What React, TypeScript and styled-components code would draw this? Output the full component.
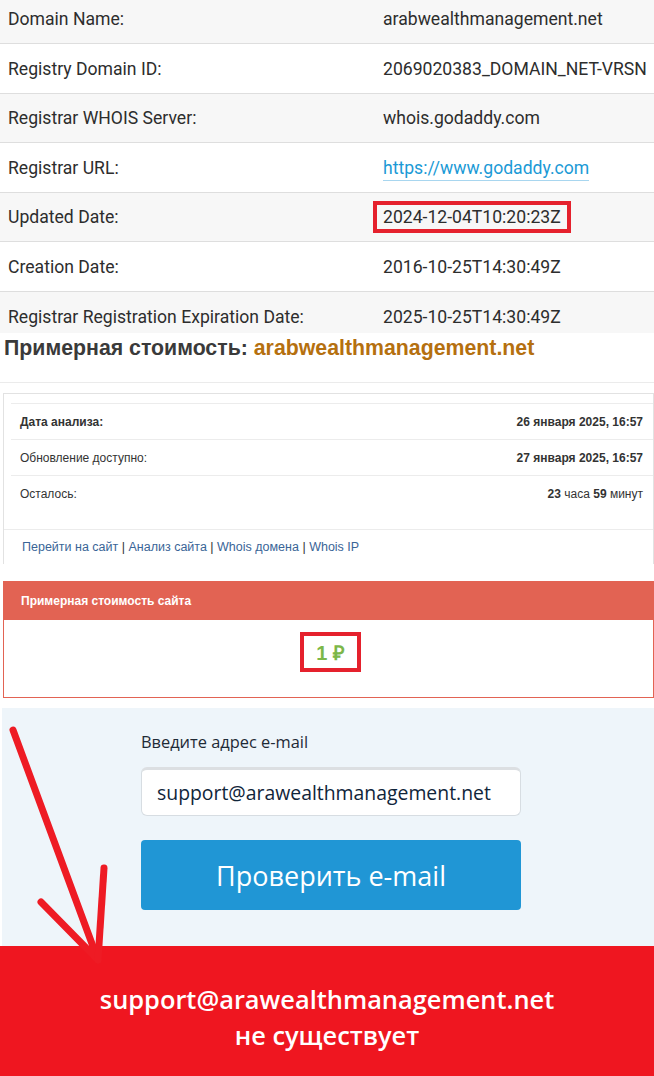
import React from "react";
import styled, { createGlobalStyle } from "styled-components";

const GlobalStyle = createGlobalStyle`
  body {
    margin: 0;
    background: #fff;
    overflow: hidden;
  }
`;

const Page = styled.div`
  width: 654px;
  height: 1076px;
  overflow: hidden;
  font-family: Roboto, "Liberation Sans", sans-serif;
`;

/* whois table */

const WhoisTable = styled.div`
  display: flex;
  flex-direction: column;
`;

const WhoisRow = styled.div<{ $h: number; $odd: boolean; $shift: number }>`
  display: grid;
  grid-template-columns: 373px 1fr;
  align-items: center;
  height: ${p => p.$h}px;
  box-sizing: border-box;
  padding-top: ${p => (p.$shift > 0 ? p.$shift : 0)}px;
  padding-bottom: ${p => (p.$shift < 0 ? -p.$shift : 0)}px;
  background: ${p => (p.$odd ? "#f7f7f7" : "#fff")};
  border-top: 1px solid #dedede;
  &:first-child {
    border-top: none;
  }
`;

const Label = styled.div`
  padding-left: 8px;
  font-size: 17.6px;
  color: #2d2d2d;
`;

const Value = styled.div`
  padding-left: 10px;
  font-size: 17.6px;
  color: #2d2d2d;
  white-space: nowrap;
`;

const Link = styled.span`
  color: #1b9ad6;
  border-bottom: 1px solid #a8d6ef;
  padding-bottom: 2px;
`;

const Highlight = styled.span`
  display: inline-block;
  margin-left: -10px;
  padding: 2px 6px;
  border: 4px solid #e5212d;
`;

/* estimate heading */

const Heading = styled.h2`
  margin: 0;
  height: 50px;
  padding: 3px 0 0 4px;
  box-sizing: border-box;
  font-family: "Liberation Sans", Arial, sans-serif;
  font-size: 21.3px;
  font-weight: bold;
  color: #3a3a3a;
  border-bottom: 1px solid #ebebeb;
`;

const Domain = styled.span`
  color: #b5700f;
`;

/* info panel */

const Panel = styled.div`
  margin: 10px 0 0 3px;
  border: 1px solid #e2e2e2;
  border-bottom: none;
  font-family: "Liberation Sans", Arial, sans-serif;
  font-size: 12px;
  color: #333;
`;

const PanelBody = styled.div`
  padding: 9px 0 18px 7px;
`;

const InfoRow = styled.div`
  display: flex;
  justify-content: space-between;
  align-items: center;
  height: 35px;
  padding: 0 10px 0 9px;
  border-top: 1px solid #ececec;
`;

const Bold = styled.b`
  font-weight: bold;
`;

const PanelFooter = styled.div`
  height: 34px;
  display: flex;
  align-items: center;
  padding-left: 18px;
  border-top: 1px solid #ececec;
  font-size: 12.5px;
  color: #333;
  a {
    color: #3a6597;
    text-decoration: none;
  }
`;

/* price card */

const Card = styled.div`
  margin: 17px 0 0 3px;
  border: 1px solid #e26353;
  font-family: "Liberation Sans", Arial, sans-serif;
`;

const CardHeader = styled.div`
  height: 38px;
  display: flex;
  align-items: center;
  padding-left: 17px;
  background: #e26353;
  color: #fff;
  font-size: 12px;
  font-weight: bold;
`;

const CardBody = styled.div`
  height: 77px;
  display: flex;
  justify-content: center;
  padding-top: 12px;
  box-sizing: border-box;
`;

const Price = styled.div`
  width: 61px;
  height: 40px;
  box-sizing: border-box;
  border: 4px solid #e5212d;
  display: flex;
  align-items: center;
  justify-content: center;
  color: #7cb749;
  font-size: 20px;
  font-weight: bold;
  margin-left: 4px;
`;

/* email check */

const CheckArea = styled.div`
  position: relative;
  margin-top: 10px;
`;

const EmailSection = styled.div`
  height: 238px;
  box-sizing: border-box;
  margin-left: 2px;
  padding: 23px 0 0 139px;
  background: #eef5fa;
  font-family: "Open Sans", "Noto Sans", sans-serif;
`;

const FieldLabel = styled.div`
  font-size: 16.4px;
  color: #1f2a36;
  height: 22px;
  line-height: 22px;
`;

const EmailInput = styled.div`
  margin-top: 14px;
  width: 380px;
  height: 49px;
  box-sizing: border-box;
  display: flex;
  align-items: center;
  padding-left: 15px;
  background: #fff;
  border: 1px solid #d7dde2;
  border-top: 3px solid #dcdfe2;
  border-radius: 6px;
  font-size: 19.4px;
  color: #10253a;
`;

const CheckButton = styled.div`
  margin-top: 24px;
  width: 380px;
  height: 70px;
  display: flex;
  align-items: center;
  justify-content: center;
  background: #2096d5;
  border-radius: 4px;
  color: #fff;
  font-size: 27px;
`;

const Banner = styled.div`
  height: 130px;
  display: flex;
  flex-direction: column;
  align-items: center;
  justify-content: center;
  padding-top: 12px;
  box-sizing: border-box;
  background: #ef1620;
  color: #fff;
  font-family: "Open Sans", "Noto Sans", sans-serif;
  font-weight: 600;
  font-size: 25.4px;
  line-height: 36px;
`;

const Arrow = styled.svg`
  position: absolute;
  top: 0;
  left: 0;
  pointer-events: none;
`;

const whois = [
  { label: "Domain Name:", value: "arabwealthmanagement.net", h: 43, shift: -5 },
  { label: "Registry Domain ID:", value: "2069020383_DOMAIN_NET-VRSN", h: 50, shift: 0 },
  { label: "Registrar WHOIS Server:", value: "whois.godaddy.com", h: 49, shift: 0 },
  { label: "Registrar URL:", value: "https://www.godaddy.com", h: 50, shift: 0, link: true },
  { label: "Updated Date:", value: "2024-12-04T10:20:23Z", h: 49, shift: 0, mark: true },
  { label: "Creation Date:", value: "2016-10-25T14:30:49Z", h: 50, shift: 0 },
  { label: "Registrar Registration Expiration Date:", value: "2025-10-25T14:30:49Z", h: 42, shift: 8 }
];

const App = () => {
  return (
    <Page>
      <GlobalStyle />

      <WhoisTable>
        {whois.map((row, i) => (
          <WhoisRow key={row.label} $h={row.h} $odd={i % 2 === 0} $shift={row.shift}>
            <Label>{row.label}</Label>
            <Value>
              {row.link ? (
                <Link>{row.value}</Link>
              ) : row.mark ? (
                <Highlight>{row.value}</Highlight>
              ) : (
                row.value
              )}
            </Value>
          </WhoisRow>
        ))}
      </WhoisTable>

      <Heading>
        Примерная стоимость: <Domain>arabwealthmanagement.net</Domain>
      </Heading>

      <Panel>
        <PanelBody>
          <InfoRow>
            <Bold>Дата анализа:</Bold>
            <Bold>26 января 2025, 16:57</Bold>
          </InfoRow>
          <InfoRow>
            <span>Обновление доступно:</span>
            <Bold>27 января 2025, 16:57</Bold>
          </InfoRow>
          <InfoRow>
            <span>Осталось:</span>
            <span>
              <Bold>23</Bold> часа <Bold>59</Bold> минут
            </span>
          </InfoRow>
        </PanelBody>
        <PanelFooter>
          <a>Перейти на сайт</a>&nbsp;|&nbsp;<a>Анализ сайта</a>&nbsp;|&nbsp;
          <a>Whois домена</a>&nbsp;|&nbsp;<a>Whois IP</a>
        </PanelFooter>
      </Panel>

      <Card>
        <CardHeader>Примерная стоимость сайта</CardHeader>
        <CardBody>
          <Price>1 ₽</Price>
        </CardBody>
      </Card>

      <CheckArea>
        <EmailSection>
          <FieldLabel>Введите адрес e-mail</FieldLabel>
          <EmailInput>support@arawealthmanagement.net</EmailInput>
          <CheckButton>Проверить e-mail</CheckButton>
        </EmailSection>
        <Banner>
          <div>support@arawealthmanagement.net</div>
          <div>не существует</div>
        </Banner>

        <Arrow width="140" height="270" viewBox="0 0 140 270">
          <g stroke="#ee1b24" strokeWidth="7" strokeLinecap="round" fill="none">
            <path d="M13 22 L98 252" />
            <path d="M41 194 L98 252" />
            <path d="M104 160 L98 252" />
          </g>
        </Arrow>
      </CheckArea>
    </Page>
  );
};

export default App;
